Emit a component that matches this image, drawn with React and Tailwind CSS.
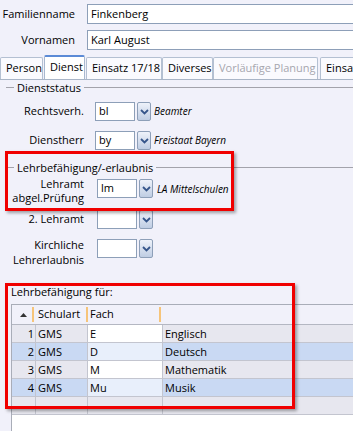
const Chevron = () => (
  <svg width="9" height="6" viewBox="0 0 9 6">
    <path d="M1 1 L4.5 4.5 L8 1" fill="none" stroke="#35558a" strokeWidth="1.8" />
  </svg>
);

const Select = ({ value }) => (
  <div className="flex gap-[2px] h-[19px]">
    <div className="w-[40px] bg-white border border-[#8d9fb8] pl-[3px] flex items-center text-[11px] text-black">
      {value}
    </div>
    <div className="w-[14px] border border-[#8d9fb8] rounded-[2px] bg-linear-to-b from-[#eef2fa] to-[#bfcde3] flex items-center justify-center">
      <Chevron />
    </div>
  </div>
);

const GroupHeader = ({ title }) => (
  <div className="flex items-center h-[13px]">
    <div className="ml-[6px] w-[8px] h-px bg-[#a3a3ab]" />
    <span className="px-[3px] leading-[13px]">{title}</span>
    <div className="flex-1 h-px bg-[#a3a3ab]" />
  </div>
);

const Tab = ({ label, w, active, disabled, ml }) => (
  <div
    className={`${w} ${ml} shrink-0 flex items-center pl-[5px] whitespace-nowrap overflow-hidden border border-b-0 rounded-t-[2px] ${
      active
        ? 'h-[24px] bg-white border-[#a8b8cf] border-t-2 border-t-[#5b8ad6] pb-[1px]'
        : 'h-[22px] bg-[#fafafe] border-[#b4c0d2]'
    } ${disabled ? 'text-[#a6a6ae]' : 'text-black'}`}
  >
    {label}
  </div>
);

const rows = [
  { n: 1, art: 'GMS', fach: 'E', bez: 'Englisch' },
  { n: 2, art: 'GMS', fach: 'D', bez: 'Deutsch' },
  { n: 3, art: 'GMS', fach: 'M', bez: 'Mathematik' },
  { n: 4, art: 'GMS', fach: 'Mu', bez: 'Musik' },
];

const App = () => {
  return (
    <div className="relative w-[353px] h-[431px] overflow-hidden bg-[#f1f1fa] text-[11px] text-black font-['Open_Sans',sans-serif]">
      {/* Kopf */}
      <div className="pt-[4px]">
        <div className="flex items-center h-[20px]">
          <div className="w-[75px] text-right">Familienname</div>
          <div className="ml-[12px] flex-1 h-[20px] bg-white border border-r-0 border-[#8d9fb8] pl-[3px] flex items-center">
            Finkenberg
          </div>
        </div>
        <div className="flex items-center h-[20px] mt-[6px]">
          <div className="w-[75px] text-right">Vornamen</div>
          <div className="ml-[12px] flex-1 h-[20px] bg-white border border-r-0 border-[#8d9fb8] pl-[3px] flex items-center">
            Karl August
          </div>
        </div>
      </div>

      {/* Tabs */}
      <div className="mt-[6px] flex items-end h-[24px] border-b border-[#a9b5c7]">
        <Tab label="Person" w="w-[43px]" ml="ml-0" />
        <Tab label="Dienst" w="w-[41px]" ml="ml-[1px]" active />
        <Tab label="Einsatz 17/18" w="w-[76px]" ml="ml-[1px]" />
        <Tab label="Diverses" w="w-[51px]" ml="ml-0" />
        <Tab label="Vorläufige Planung" w="w-[105px]" ml="ml-0" disabled />
        <Tab label="Einsatz" w="w-[40px]" ml="ml-[2px]" />
      </div>

      <div className="mt-[1px]">
        <GroupHeader title="Dienststatus" />
      </div>

      {/* Dienststatus */}
      <div className="mt-[8px] flex items-center">
        <div className="w-[84px] text-right">Rechtsverh.</div>
        <div className="ml-[11px]"><Select value="bl" /></div>
        <span className="ml-[3px] italic text-[10px]">Beamter</span>
      </div>
      <div className="mt-[10px] flex items-center">
        <div className="w-[84px] text-right">Dienstherr</div>
        <div className="ml-[11px]"><Select value="by" /></div>
        <span className="ml-[3px] italic text-[10px]">Freistaat Bayern</span>
      </div>

      <div className="mt-[11px]">
        <GroupHeader title="Lehrbefähigung/-erlaubnis" />
      </div>

      <div className="mt-[3px] flex items-start">
        <div className="w-[84px] text-right leading-[14px]">
          Lehramt<br />abgel.Prüfung
        </div>
        <div className="ml-[13px] mt-[2px]"><Select value="lm" /></div>
        <span className="ml-[4px] mt-[5px] italic text-[10px]">LA Mittelschulen</span>
      </div>
      <div className="mt-[5px] flex items-center">
        <div className="w-[84px] text-right">2. Lehramt</div>
        <div className="ml-[13px]"><Select value="" /></div>
      </div>
      <div className="mt-[8px] flex items-start">
        <div className="w-[84px] text-right leading-[15px]">
          Kirchliche<br />Lehrerlaubnis
        </div>
        <div className="ml-[13px] mt-[2px]"><Select value="" /></div>
      </div>

      {/* Tabelle */}
      <div className="mt-[18px] pl-[11px] leading-[14px]">Lehrbefähigung für:</div>

      <div className="ml-[11px] mt-[5px] border-l border-t border-[#a9adb8] bg-white h-[200px]">
        <div className="flex h-[20px] bg-[#f1f1fa] border-b border-[#b4b7c2] items-center">
          <div className="w-[24px] flex items-center justify-end pr-[2px] gap-[5px]">
            <svg width="7" height="4" viewBox="0 0 7 4"><path d="M0 4 L3.5 0 L7 4 Z" fill="#333" /></svg>
            <div className="w-[2px] h-[15px] bg-[#f6c47a]" />
          </div>
          <div className="w-[52px] flex items-center pl-[2px]">
            <span className="flex-1">Schulart</span>
            <div className="w-[2px] h-[15px] bg-[#f6c47a]" />
          </div>
          <div className="w-[73px] flex items-center pl-[2px]">
            <span className="flex-1">Fach</span>
            <div className="w-[2px] h-[15px] bg-[#f6c47a]" />
          </div>
          <div className="flex-1" />
        </div>
        {rows.map((r) => {
          const odd = r.n % 2 === 1;
          return (
            <div
              key={r.n}
              className={`flex h-[18px] border-b border-[#c3c5cf] ${odd ? 'bg-[#e7e7ef]' : 'bg-[#c9d9f3]'}`}
            >
              <div className="w-[24px] border-r border-[#c3c5cf] text-right pr-[1px] leading-[17px]">{r.n}</div>
              <div className="w-[52px] border-r border-[#c3c5cf] pl-[2px] leading-[17px]">{r.art}</div>
              <div className={`w-[75px] border-r border-[#c3c5cf] pl-[2px] leading-[17px] ${odd ? 'bg-white' : 'bg-[#e8effb]'}`}>
                {r.fach}
              </div>
              <div className="flex-1 pl-[2px] leading-[17px]">{r.bez}</div>
            </div>
          );
        })}
        <div className="flex h-[18px] border-b border-[#c3c5cf] bg-[#e7e7ef]">
          <div className="w-[24px] border-r border-[#c3c5cf]" />
          <div className="w-[52px] border-r border-[#c3c5cf]" />
          <div className="w-[75px] border-r border-[#c3c5cf]" />
          <div className="flex-1" />
        </div>
      </div>

      {/* Markierungen */}
      <div className="absolute left-[5px] top-[151px] w-[229px] h-[60px] border-[3px] border-[#f00000] shadow-[2px_2px_3px_rgba(0,0,0,0.35)]" />
      <div className="absolute left-[5px] top-[283px] w-[290px] h-[126px] border-[3px] border-[#f00000] shadow-[2px_2px_3px_rgba(0,0,0,0.35)]" />
    </div>
  );
};

export default App;
